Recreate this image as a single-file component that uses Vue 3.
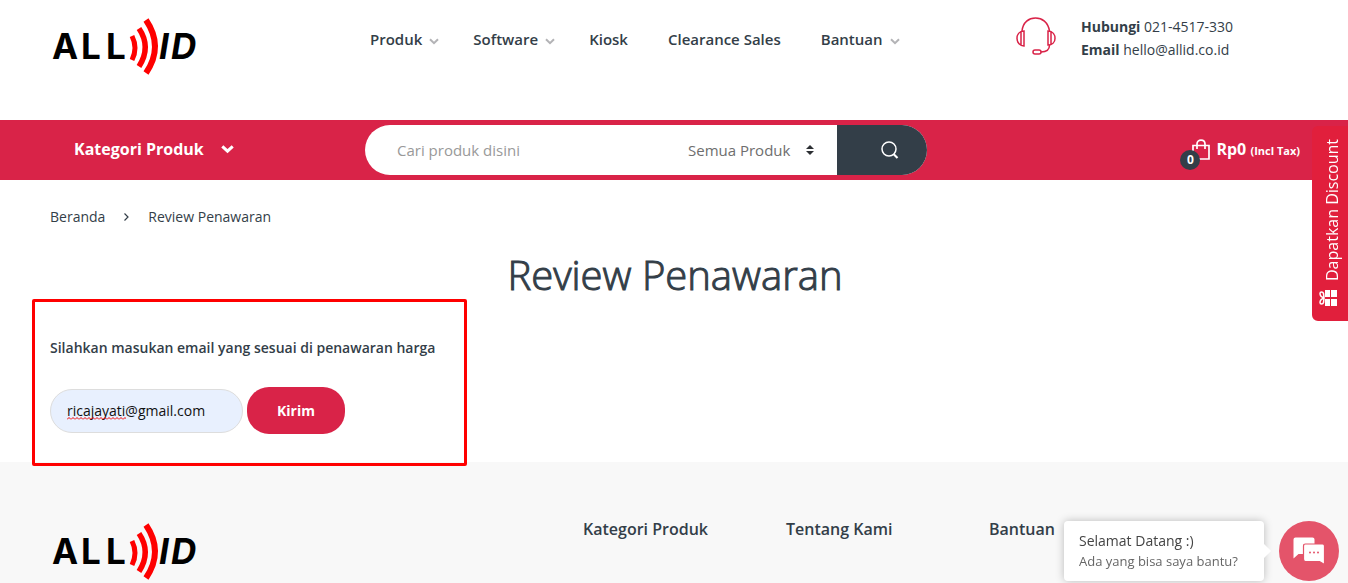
<script setup>
import { h, ref } from 'vue'

const arc = (d, width) => h('path', { d, fill: 'none', stroke: '#fe0000', 'stroke-width': width })
const letters = (x, text, style) =>
  h('text', { x, y: 42, 'font-family': 'Inter, sans-serif', 'font-size': 35, 'font-weight': 700, 'font-style': style }, text)

const BrandMark = () =>
  h('svg', { width: 150, height: 60, viewBox: '0 0 150 60', overflow: 'visible' }, [
    letters('2 31 56', 'ALL', 'normal'),
    letters('109 121', 'ID', 'italic'),
    arc('M82 19 Q88 31 82 43', 5),
    arc('M89 11.500 Q101.500 30 89 49.500', 5.5),
    arc('M96 3 Q114 29.500 96 56', 6),
  ])

const menu = [
  { label: 'Produk', sub: true },
  { label: 'Software', sub: true },
  { label: 'Kiosk', sub: false },
  { label: 'Clearance Sales', sub: false },
  { label: 'Bantuan', sub: true },
]
const footerColumns = ['Kategori Produk', 'Tentang Kami', 'Bantuan']
const email = ref('ricajayati@gmail.com')
const query = ref('')
const category = ref('all')
</script>

<template>
  <div class="page">
    <header class="masthead wrap">
      <a class="logo" href="#" aria-label="ALL ID"><BrandMark /></a>
      <nav class="menu">
        <a v-for="item in menu" :key="item.label" href="#" :class="{ plain: !item.sub }">
          {{ item.label }}
          <svg v-if="item.sub" width="10" height="7" viewBox="0 0 10 7"><path d="M1 1.200 L5 5.200 L9 1.200" fill="none" stroke="#b3b3b6" stroke-width="2" /></svg>
        </a>
      </nav>
      <div class="contact">
        <svg width="40" height="40" viewBox="0 0 40 40" fill="none" stroke="#d92348" stroke-width="1.500">
          <path d="M6 14 C7 5 13 1 19.500 1 C26 1 32 5 33.500 14" />
          <path d="M8 14 C3 14 1 18 1 21.500 C1 25.500 4 29 8 29 Z M5 15 V28" />
          <path d="M32 14 C37 14 39 18 39 21.500 C39 25.500 36 28 32 28 Z M35 15 V27" />
          <path d="M33.500 28 C33.500 32 31 35 25 35" />
          <rect x="17" y="33" width="8" height="4" rx="2" />
        </svg>
        <address>
          <div><b>Hubungi</b> 021-4517-330</div>
          <div><b>Email</b> hello@allid.co.id</div>
        </address>
      </div>
    </header>

    <div class="bar">
      <div class="bar-inner wrap">
        <button class="departments" type="button">
          Kategori Produk
          <svg width="13" height="9" viewBox="0 0 13 9"><path d="M1.300 1.300 L6.500 6.200 L11.700 1.300" fill="none" stroke="#fff" stroke-width="3" /></svg>
        </button>
        <form class="search" @submit.prevent>
          <input v-model="query" type="text" placeholder="Cari produk disini" aria-label="Cari produk" />
          <div class="select">
            <select v-model="category" aria-label="Kategori"><option value="all">Semua Produk</option></select>
            <svg width="8" height="10" viewBox="0 0 8 10" fill="#2c2f33"><path d="M4 0 L8 4 H0 Z M0 6 H8 L4 10 Z" /></svg>
          </div>
          <button type="submit" aria-label="Cari">
            <svg width="18" height="18" viewBox="0 0 18 18" fill="none" stroke="#fff" stroke-width="1.500"><circle cx="8" cy="8" r="7" /><path d="M12.500 13 L16.500 17" stroke-width="2.200" /></svg>
          </button>
        </form>
        <a class="cart" href="#">
          <span class="bag">
            <svg width="18" height="22" viewBox="0 0 18 22" fill="none" stroke="#fff" stroke-width="1.700"><path d="M1 6.500 H17 V20 H1 Z" /><path d="M5 10 V5 C5 -0.200 13 -0.200 13 5 V10" /></svg>
            <span class="count">0</span>
          </span>
          <span class="total">Rp0 <small>(Incl Tax)</small></span>
        </a>
      </div>
    </div>

    <main class="wrap">
      <nav class="crumbs" aria-label="Breadcrumb">
        <a href="#">Beranda</a>
        <svg width="5" height="8" viewBox="0 0 5 8"><path d="M0.500 0.500 L4 4 L0.500 7.500" fill="none" stroke="#333e48" stroke-width="1.200" /></svg>
        <span>Review Penawaran</span>
      </nav>
      <h1>Review Penawaran</h1>
      <form class="review" @submit.prevent>
        <label for="email">Silahkan masukan email yang sesuai di penawaran harga</label>
        <div class="row">
          <div class="field">
            <input id="email" v-model="email" type="text" />
            <svg class="squiggle" width="59" height="3" aria-hidden="true">
              <defs><pattern id="wave" width="4" height="3" patternUnits="userSpaceOnUse"><path d="M0 2.500 L2 0.500 L4 2.500" fill="none" stroke="#f00000" /></pattern></defs>
              <rect width="59" height="3" fill="url(#wave)" />
            </svg>
          </div>
          <button type="submit">Kirim</button>
        </div>
      </form>
    </main>

    <footer>
      <div class="footer-inner wrap">
        <a class="logo" href="#" aria-label="ALL ID"><BrandMark /></a>
        <h2 v-for="title in footerColumns" :key="title">{{ title }}</h2>
      </div>
    </footer>

    <button class="discount" type="button">
      <svg width="18" height="18" viewBox="0 0 18 18">
        <g fill="#fff"><path d="M6 1 H11 V8 H6 Z M12 1 H18 V8 H12 Z M6 10 H11 V17 H6 Z M12 10 H18 V17 H12 Z" /></g>
        <path d="M5 9 C2 8 1 6.500 1 4.500 C1 2.500 4 2.500 4.500 4.500 L5 9 C2 10 1 11.500 1 13.500 C1 15.500 4 15.500 4.500 13.500 Z" fill="none" stroke="#fff" stroke-width="1.500" />
      </svg>
      <span>Dapatkan Discount</span>
    </button>

    <aside class="chat">
      <div class="bubble">
        <p>Selamat Datang :)</p>
        <p class="ask">Ada yang bisa saya bantu?</p>
      </div>
      <button type="button" aria-label="Chat">
        <svg width="32" height="28" viewBox="0 0 32 28">
          <path d="M2.500 0.500 H19.500 Q21.500 0.500 21.500 2.500 V15.500 Q21.500 17 19.500 17 H5.500 L0.500 21.500 V2.500 Q0.500 0.500 2.500 0.500 Z" fill="#fff" />
          <path d="M12.500 7 H29.500 Q31.500 7 31.500 9 V27.500 L26.500 24.500 H12.500 Q10.500 24.500 10.500 22 V9 Q10.500 7 12.500 7 Z" fill="#fff" stroke="#e4546a" stroke-width="1.200" />
          <g fill="#e4546a"><circle cx="17" cy="15.500" r="1" /><circle cx="21" cy="15.500" r="1" /><circle cx="25" cy="15.500" r="1" /></g>
        </svg>
      </button>
    </aside>
  </div>
</template>

<style>
body {
  margin: 0;
}
</style>

<style scoped>
.page {
  display: flex;
  flex-direction: column;
  min-height: 100vh;
  background: #fff;
  color: #333e48;
  font: 14px/22px "Open Sans", sans-serif;
}
.page * {
  box-sizing: border-box;
}
svg {
  display: block;
  flex: none;
}
a {
  color: inherit;
  text-decoration: none;
}
button {
  border: 0;
  padding: 0;
  font: inherit;
  cursor: pointer;
}
.wrap {
  padding-left: 50px;
  padding-right: 48px;
}
.masthead {
  display: grid;
  grid-template-columns: 320px 1fr 284px;
  align-items: start;
  height: 120px;
  padding-top: 17px;
}
.logo {
  display: block;
  height: 60px;
}
.menu {
  display: flex;
  gap: 34px;
  padding-top: 11px;
  font-size: 15px;
  font-weight: 600;
  white-space: nowrap;
}
.menu a {
  display: flex;
  align-items: center;
  gap: 7px;
}
.menu svg {
  margin-top: 4px;
}
.menu .plain {
  margin-right: 6px;
}
.contact {
  display: flex;
  gap: 25px;
}
.contact address {
  font-style: normal;
  line-height: 23px;
  margin-top: -2px;
}
.contact b {
  font-weight: 700;
}
.bar {
  background: #d92348;
}
.bar-inner {
  display: grid;
  grid-template-columns: 315px 562px 1fr;
  align-items: center;
  height: 60px;
  color: #fff;
}
.departments {
  display: flex;
  align-items: center;
  gap: 17px;
  padding: 0 0 2px 24px;
  background: none;
  color: #fff;
  font-size: 16px;
  font-weight: 700;
}
.search {
  display: flex;
  height: 50px;
  border-radius: 25px;
  overflow: hidden;
  background: #fff;
}
.search input {
  flex: 1;
  min-width: 0;
  border: 0;
  outline: 0;
  padding: 0 0 0 32px;
  background: none;
  font: 15px "Open Sans", sans-serif;
  color: #333e48;
}
.search input::placeholder {
  color: #999;
}
.select {
  position: relative;
  width: 149px;
}
.select select {
  appearance: none;
  width: 100%;
  height: 100%;
  border: 0;
  padding: 0;
  background: none;
  font: 15px "Open Sans", sans-serif;
  color: #6e6e6e;
}
.select svg {
  position: absolute;
  right: 23px;
  top: 20px;
  pointer-events: none;
}
.search button {
  display: flex;
  align-items: center;
  justify-content: center;
  width: 90px;
  padding-left: 16px;
  background: #333e48;
}
.cart {
  display: flex;
  justify-content: flex-end;
  align-items: center;
  gap: 6px;
  font-weight: 700;
  font-size: 16px;
}
.bag {
  position: relative;
}
.count {
  position: absolute;
  left: -12px;
  top: 11px;
  width: 20px;
  height: 20px;
  border-radius: 50%;
  background: #333e48;
  font-size: 12px;
  line-height: 20px;
  text-align: center;
}
.total small {
  font-size: 11px;
}
.crumbs {
  display: flex;
  align-items: center;
  gap: 19px;
  padding-top: 26px;
}
h1 {
  margin: 24px 0 0;
  font-size: 40px;
  line-height: 46px;
  font-weight: 300;
  -webkit-text-stroke: 1px #333e48;
  text-align: center;
}
.review {
  position: relative;
  z-index: 1;
  width: 435px;
  margin: 1px 0 -4px -18px;
  padding: 35px 0 29px 15px;
  border: 3px solid #f00;
  border-radius: 2px;
}
.review label {
  display: block;
  font-weight: 600;
  white-space: nowrap;
}
.row {
  display: flex;
  align-items: center;
  gap: 4px;
  margin-top: 28px;
}
.field {
  position: relative;
}
.field input {
  display: block;
  width: 193px;
  height: 44px;
  border: 1px solid #ddd;
  border-radius: 22px;
  padding: 0 16px;
  background: #e8f0fe;
  color: #111;
  font: 14px "Open Sans", sans-serif;
}
.squiggle {
  position: absolute;
  left: 17px;
  top: 28px;
}
.row button {
  width: 98px;
  height: 47px;
  border-radius: 22px;
  background: #d92348;
  color: #fff;
  font-weight: 700;
}
footer {
  flex: 1;
  background: #f8f8f8;
}
.footer-inner {
  display: grid;
  grid-template-columns: 533px 203px 203px 1fr;
  padding-top: 60px;
}
h2 {
  margin: -4px 0 0;
  font-size: 16px;
  line-height: 22px;
  font-weight: 600;
}
.discount {
  position: fixed;
  right: 0;
  top: 126px;
  z-index: 3;
  display: flex;
  align-items: center;
  gap: 8px;
  width: 36px;
  height: 195px;
  padding: 14px 0;
  border-radius: 0 6px 6px 0;
  background: #e11f3c;
  color: #fff;
  font-size: 16px;
  line-height: 22px;
  writing-mode: vertical-rl;
  transform: rotate(180deg);
  white-space: nowrap;
}
.discount span {
  padding-right: 4px;
}
.discount svg {
  margin-left: 4px;
  transform: rotate(180deg);
}
.chat {
  position: fixed;
  right: 9px;
  bottom: 2px;
  z-index: 3;
  display: flex;
  align-items: center;
  gap: 15px;
}
.bubble {
  position: relative;
  width: 200px;
  height: 60px;
  padding: 9px 15px;
  border-radius: 4px;
  background: #fff;
  box-shadow: 0 0 8px rgba(0, 0, 0, 0.25);
  color: #444;
  line-height: 21px;
}
.bubble::after {
  content: "";
  position: absolute;
  right: -5px;
  top: 25px;
  width: 10px;
  height: 10px;
  background: #fff;
  transform: rotate(45deg);
}
.bubble p {
  margin: 0;
  white-space: nowrap;
}
.bubble .ask {
  color: #666;
  font-size: 13px;
}
.chat button {
  display: flex;
  align-items: center;
  justify-content: center;
  width: 60px;
  height: 60px;
  border-radius: 50%;
  background: #e4546a;
}
</style>
